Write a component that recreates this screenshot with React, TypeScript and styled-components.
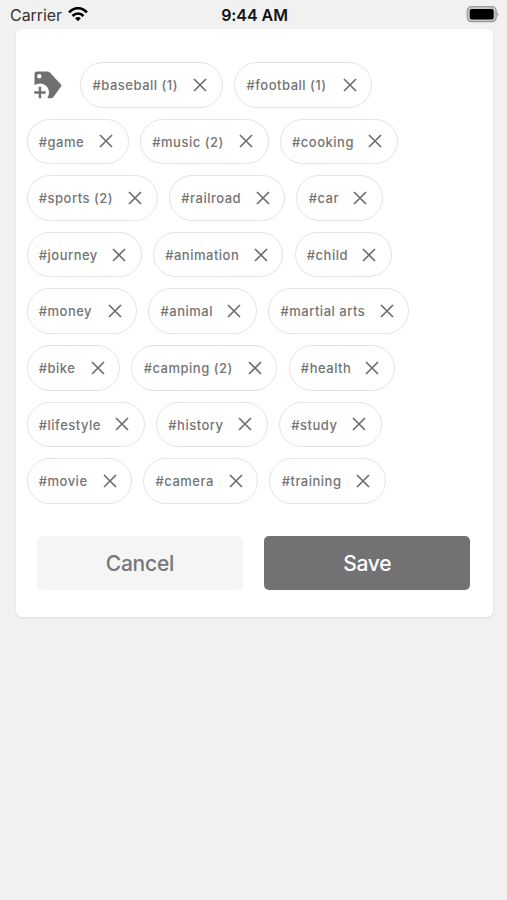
import React from "react";
import styled, { createGlobalStyle } from "styled-components";

const GlobalStyle = createGlobalStyle`
  * { box-sizing: border-box; }
  body { margin: 0; background: #f1f1f1; font-family: Inter, "Liberation Sans", sans-serif; }
`;

const Screen = styled.div`
  width: 507px;
  height: 900px;
  background: #f1f1f1;
  overflow: hidden;
`;

const StatusBar = styled.header`
  height: 29px;
  padding: 0 8px 0 10px;
  display: grid;
  grid-template-columns: 1fr auto 1fr;
  align-items: center;
  color: #111;
`;

const Carrier = styled.div`
  display: flex;
  align-items: center;
  gap: 6px;
  font-size: 16px;
  letter-spacing: -0.05px;
  color: #333;
`;

const Clock = styled.div`
  font-size: 16px;
  font-weight: 600;
  letter-spacing: -0.05px;
`;

const Battery = styled.div`
  display: flex;
  justify-content: flex-end;
`;

const Card = styled.main`
  width: 477px;
  height: 588px;
  margin-left: 15.5px;
  padding: 33px 11px 0;
  background: #fff;
  border-radius: 6px;
  box-shadow: 0 1px 2px rgba(0, 0, 0, 0.1);
`;

const TagList = styled.section`
  display: flex;
  flex-direction: column;
  gap: 11px;
`;

const TagRow = styled.div`
  display: flex;
  align-items: center;
  gap: 11.2px;
`;

const AddTag = styled.button`
  width: 42.6px;
  height: 45.6px;
  padding: 0 0 0 7px;
  border: 0;
  background: none;
  display: flex;
  align-items: center;
`;

const Chip = styled.div<{ $width: number }>`
  width: ${(p) => p.$width}px;
  height: 45.6px;
  padding: 0 14.6px 0 11.2px;
  border: 1px solid #e4e4e4;
  border-radius: 23px;
  display: flex;
  align-items: center;
  justify-content: space-between;
  white-space: nowrap;
`;

const ChipLabel = styled.span`
  font-size: 13px;
  font-weight: 500;
  letter-spacing: 0.5px;
  line-height: 16px;
  padding-top: 0.4px;
  color: #747474;
`;

const Actions = styled.footer`
  display: flex;
  gap: 21.5px;
  padding: 32px 11.4px 0 10.5px;
`;

const ActionButton = styled.button<{ $primary?: boolean }>`
  flex: 1;
  height: 54.4px;
  padding: 2px 0 0;
  border: 0;
  border-radius: 5px;
  font: 500 21px Inter, "Liberation Sans", sans-serif;
  letter-spacing: -0.25px;
  background: ${(p) => (p.$primary ? "#727272" : "#f5f5f5")};
  color: ${(p) => (p.$primary ? "#fff" : "#777")};
`;

const WifiIcon = () => (
  <svg width="20" height="15" viewBox="0 0 20 15" fill="none" stroke="#000" strokeWidth="2.6">
    <path d="M1.1 5.5C6-.2 14-.2 18.9 5.5" />
    <path d="M4.5 9C7.6 5.6 12.4 5.6 15.5 9" />
    <path d="M7.1 11.2Q10 8.6 12.9 11.2L10 14.2Z" fill="#000" stroke="none" />
  </svg>
);

const BatteryIcon = () => (
  <svg width="33" height="17" viewBox="0 0 33 17">
    <rect x="1.2" y="0.7" width="29" height="15" rx="4.2" fill="#c8c8c8" stroke="#999" strokeWidth="1.2" />
    <rect x="3.7" y="3" width="24" height="10.4" rx="2" fill="#000" />
    <path d="M31.2 6q2 2.2 0 4.4z" fill="#999" />
  </svg>
);

const TagPlusIcon = () => (
  <svg width="28" height="28" viewBox="0 0 28 28" fill="#707070">
    <path
      fillRule="evenodd"
      d="M2.8.4H13.2Q14.8.4 15.9 1.6L27 13.5Q27.8 14.4 27 15.4L19.4 26Q18.4 27.3 16.8 27.3H13.4Q15 24.5 15 21.5C15 16.2 10.8 12.5 6 12.5Q3 12.5.5 14V2.8Q.5.4 2.8.4ZM5.3 3A2.2 2.2 0 1 0 5.3 7.4A2.2 2.2 0 1 0 5.3 3Z"
    />
    <path d="M4.7 15.7h2.5v4.5h4.5v2.5H7.2v4.6H4.7v-4.6H.2v-2.5h4.5z" />
  </svg>
);

const CloseIcon = () => (
  <svg width="14" height="14" viewBox="0 0 14 14" stroke="#6c6c6c" strokeWidth="1.65">
    <path d="M1 1l12 12M13 1L1 13" />
  </svg>
);

type Tag = { label: string; width: number };

const rows: Tag[][] = [
  [{ label: "baseball (1)", width: 142.8 }, { label: "football (1)", width: 138 }],
  [{ label: "game", width: 102.4 }, { label: "music (2)", width: 128.6 }, { label: "cooking", width: 118 }],
  [{ label: "sports (2)", width: 131.4 }, { label: "railroad", width: 116.2 }, { label: "car", width: 86.6 }],
  [{ label: "journey", width: 115.3 }, { label: "animation", width: 130.4 }, { label: "child", width: 97.4 }],
  [{ label: "money", width: 110.6 }, { label: "animal", width: 108.8 }, { label: "martial arts", width: 141 }],
  [{ label: "bike", width: 93.8 }, { label: "camping (2)", width: 146 }, { label: "health", width: 106.4 }],
  [{ label: "lifestyle", width: 118.4 }, { label: "history", width: 111.8 }, { label: "study", width: 103 }],
  [{ label: "movie", width: 105.6 }, { label: "camera", width: 115 }, { label: "training", width: 116.4 }],
];

export default function App() {
  return (
    <>
      <GlobalStyle />
      <Screen>
        <StatusBar>
          <Carrier>
            Carrier
            <WifiIcon />
          </Carrier>
          <Clock>9:44 AM</Clock>
          <Battery>
            <BatteryIcon />
          </Battery>
        </StatusBar>
        <Card>
          <TagList>
            {rows.map((row, index) => (
              <TagRow key={index}>
                {index === 0 && (
                  <AddTag aria-label="Add tag">
                    <TagPlusIcon />
                  </AddTag>
                )}
                {row.map((tag) => (
                  <Chip key={tag.label} $width={tag.width}>
                    <ChipLabel>#{tag.label}</ChipLabel>
                    <CloseIcon />
                  </Chip>
                ))}
              </TagRow>
            ))}
          </TagList>
          <Actions>
            <ActionButton>Cancel</ActionButton>
            <ActionButton $primary>Save</ActionButton>
          </Actions>
        </Card>
      </Screen>
    </>
  );
}
